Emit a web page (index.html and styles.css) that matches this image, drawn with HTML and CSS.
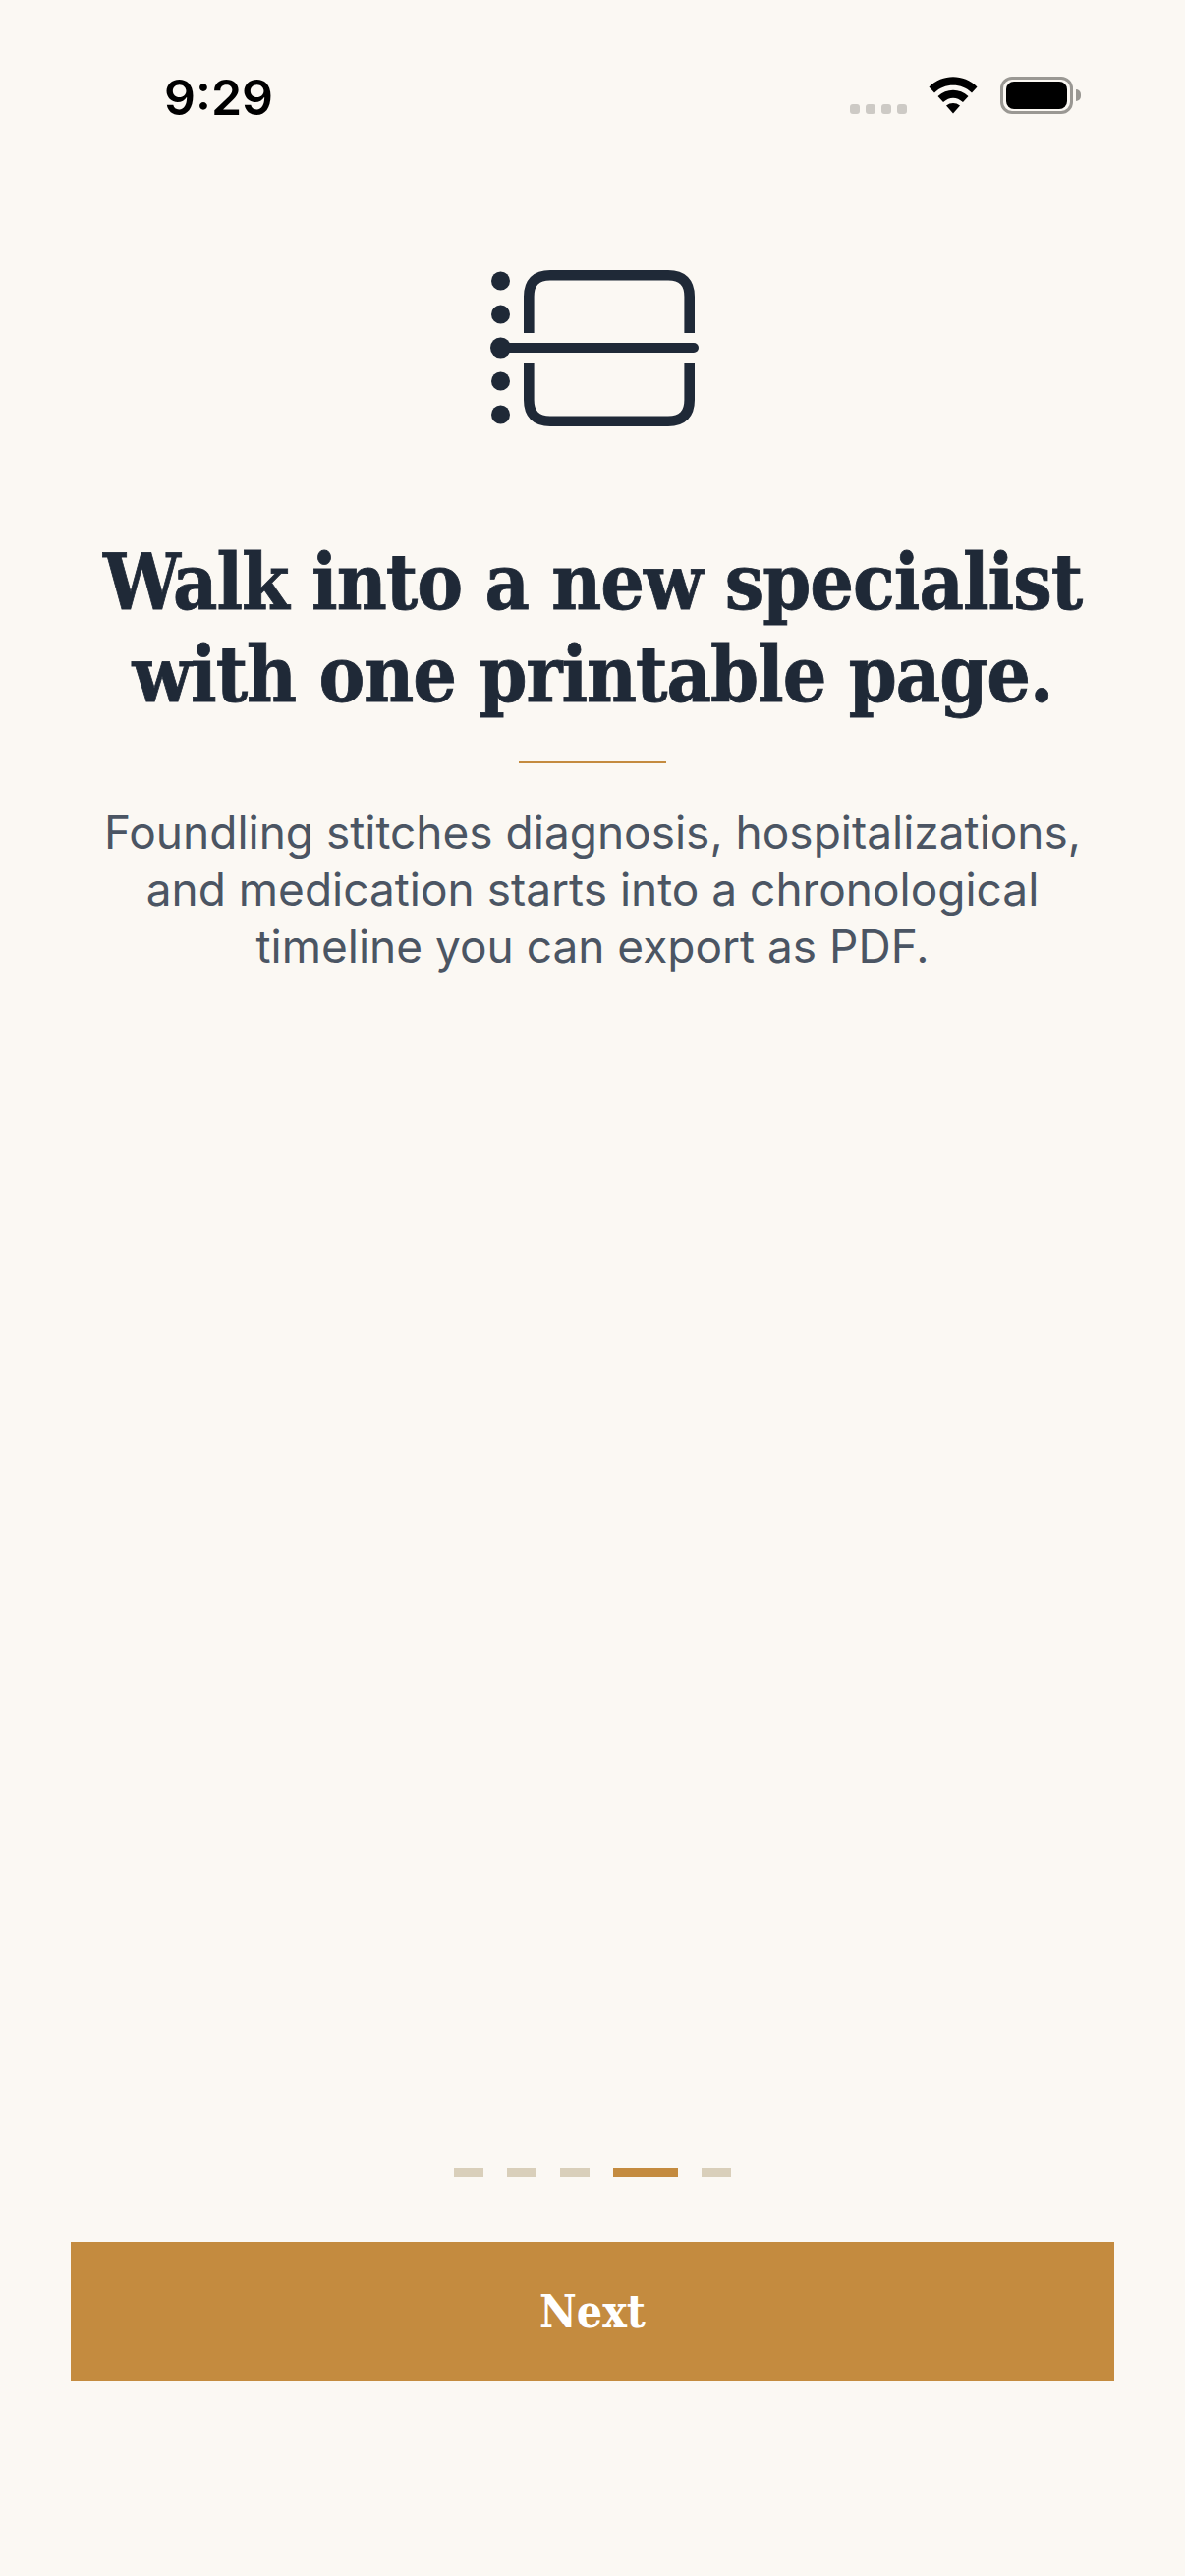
FILE: index.html
```html
<!DOCTYPE html>
<html lang="en">
<head>
    <meta charset="UTF-8">
    <meta name="viewport" content="width=device-width, initial-scale=1.0">
    <title>Foundling</title>
    <link rel="stylesheet" href="styles.css">
</head>
<body>
    <div class="screen">
        <div class="status-bar">
            <span class="time">9:29</span>
            <div class="status-icons">
                <div class="signal-dots">
                    <span></span><span></span><span></span><span></span>
                </div>
                <svg class="wifi" width="50" height="38" viewBox="0 0 50 38">
                    <path d="M0.5 10.5 C14 -3.2 36 -3.2 49.5 10.5 L44 16.5 C33.5 6.2 16.5 6.2 6 16.5 Z" fill="#000"/>
                    <path d="M9.5 20 C18.5 11.5 31.5 11.5 40.5 20 L35 26 C28.5 20.3 21.5 20.3 15 26 Z" fill="#000"/>
                    <path d="M18 29.5 C22.5 26.2 27.5 26.2 32 29.5 L25 37.5 Z" fill="#000"/>
                </svg>
                <div class="battery">
                    <div class="battery-body"><div class="battery-fill"></div></div>
                    <div class="battery-cap"></div>
                </div>
            </div>
        </div>

        <div class="content">
            <svg class="hero-icon" width="213" height="162" viewBox="0 0 213 162">
                <circle cx="10.500" cy="11" r="9.500" fill="#1f2937"/>
                <circle cx="10.500" cy="45" r="9.500" fill="#1f2937"/>
                <circle cx="10.500" cy="79" r="10.500" fill="#1f2937"/>
                <circle cx="10.500" cy="113" r="9.500" fill="#1f2937"/>
                <circle cx="10.500" cy="147" r="9.500" fill="#1f2937"/>
                <path d="M39.300 64 V27 Q39.300 5.300 61 5.300 H181 Q202.700 5.300 202.700 27 V64" fill="none" stroke="#1f2937" stroke-width="10.600"/>
                <path d="M39.300 94 V132 Q39.300 153.700 61 153.700 H181 Q202.700 153.700 202.700 132 V94" fill="none" stroke="#1f2937" stroke-width="10.600"/>
                <path d="M10.500 79 H207" fill="none" stroke="#1f2937" stroke-width="10" stroke-linecap="round"/>
            </svg>

            <h1>Walk into a new specialist<br>with one printable page.</h1>
            <div class="divider"></div>
            <p>Foundling stitches diagnosis, hospitalizations,<br>and medication starts into a chronological<br>timeline you can export as PDF.</p>
        </div>

        <div class="pager">
            <span class="dash"></span>
            <span class="dash"></span>
            <span class="dash"></span>
            <span class="dash active"></span>
            <span class="dash"></span>
        </div>

        <button class="next-btn">Next</button>
    </div>
</body>
</html>
```

FILE: styles.css
```css
* {
    box-sizing: border-box;
}

body {
    margin: 0;
    padding: 0;
    background-color: #fbf8f3;
    font-family: 'Inter', sans-serif;
}

.screen {
    display: flex;
    flex-direction: column;
    width: 1206px;
    height: 2622px;
    overflow: hidden;
}

.status-bar {
    display: flex;
    justify-content: space-between;
    align-items: center;
    height: 98px;
    margin-top: 50px;
    padding: 0 106px 0 167px;
}

.time {
    font-family: 'Inter', sans-serif;
    font-size: 50px;
    font-weight: 600;
    color: #000;
}

.status-icons {
    display: flex;
    align-items: flex-end;
    margin-bottom: 4px;
}

.signal-dots {
    display: flex;
    gap: 6px;
    margin-right: 22px;
}

.signal-dots span {
    width: 10px;
    height: 10px;
    border-radius: 3px;
    background-color: #cdcac5;
}

.wifi {
    margin-right: 23px;
}

.battery {
    display: flex;
    align-items: center;
}

.battery-body {
    width: 74px;
    height: 38px;
    padding: 2px 3px;
    border: 3px solid #9a9893;
    border-radius: 12px;
}

.battery-fill {
    height: 100%;
    background-color: #000;
    border-radius: 8px;
}

.battery-cap {
    width: 5px;
    height: 12px;
    margin-left: 3px;
    background-color: #9a9893;
    border-radius: 0 5px 5px 0;
}

.content {
    display: flex;
    flex-direction: column;
    align-items: center;
    padding: 127px 60px 0;
    text-align: center;
}

.hero-icon {
    margin-left: 4px;
}

h1 {
    margin: 109px 0 0;
    font-family: 'DejaVu Serif Condensed', 'DejaVu Serif', serif;
    font-size: 78px;
    font-weight: 700;
    font-stretch: condensed;
    letter-spacing: -1px;
    line-height: 94px;
    color: #1f2937;
    -webkit-text-stroke: 0.8px #1f2937;
    white-space: nowrap;
}

.divider {
    width: 150px;
    height: 2px;
    margin-top: 41px;
    background-color: #c48b3f;
}

p {
    margin: 41px 0 0;
    font-size: 46px;
    line-height: 58px;
    color: #4b5563;
}

.pager {
    display: flex;
    justify-content: center;
    gap: 24px;
    margin-top: auto;
}

.dash {
    width: 30px;
    height: 9px;
    background-color: #d9cfba;
}

.dash.active {
    width: 66px;
    background-color: #c48b3f;
}

.next-btn {
    display: block;
    width: 1062px;
    height: 142px;
    margin: 66px 72px 198px;
    border: none;
    background-color: #c48b3f;
    color: #fff;
    font-family: 'DejaVu Serif Condensed', 'DejaVu Serif', serif;
    font-size: 46px;
    font-weight: 700;
    font-stretch: condensed;
}
```
